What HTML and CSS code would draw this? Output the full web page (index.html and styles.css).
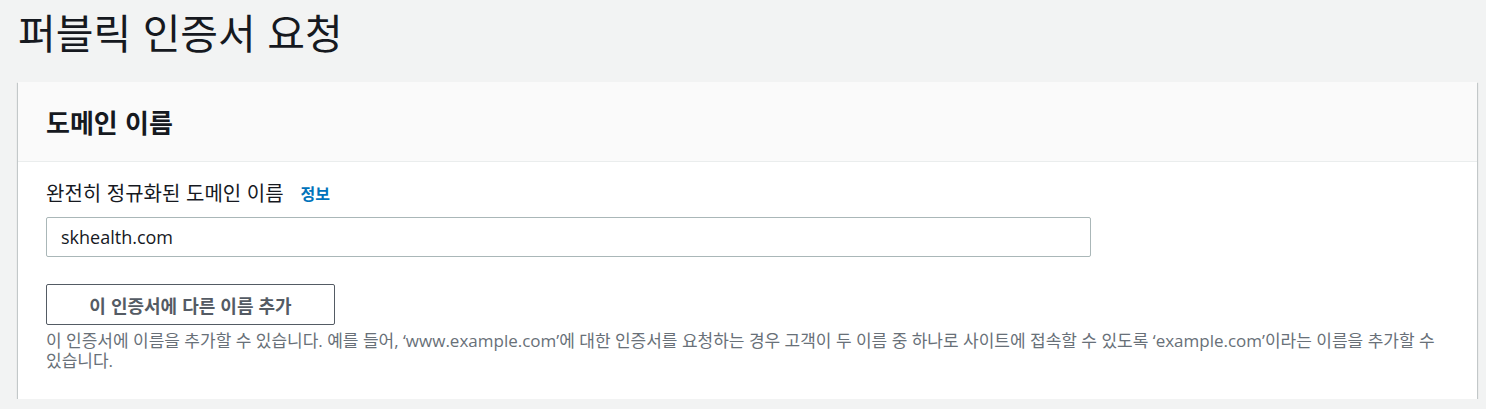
FILE: index.html
```html
<!DOCTYPE html>
<html lang="ko">
<head>
<meta charset="utf-8">
<link rel="stylesheet" href="styles.css">
</head>
<body>
<div class="page">
  <h1 class="title">퍼블릭 인증서 요청</h1>
  <section class="card">
    <div class="card-header">
      <h2 class="card-title">도메인 이름</h2>
    </div>
    <div class="card-body">
      <div class="label-row">
        <span class="label">완전히 정규화된 도메인 이름</span>
        <a class="info">정보</a>
      </div>
      <div class="input">skhealth.com</div>
      <button class="btn">이 인증서에 다른 이름 추가</button>
      <p class="desc">이 인증서에 이름을 추가할 수 있습니다. 예를 들어, ‘www.example.com’에 대한 인증서를 요청하는 경우 고객이 두 이름 중 하나로 사이트에 접속할 수 있도록 ‘example.com’이라는 이름을 추가할 수 있습니다.</p>
    </div>
  </section>
</div>
</body>
</html>
```

FILE: styles.css
```css
html, body {
  margin: 0;
  padding: 0;
  background: #f2f3f3;
}
body {
  font-family: "Open Sans", "Noto Sans CJK KR", sans-serif;
  color: #16191f;
}
.page {
  padding: 0 9px 0 18px;
}
.title {
  margin: 0;
  padding-top: 7px;
  height: 82px;
  box-sizing: border-box;
  font-family: "Noto Sans CJK KR", sans-serif;
  font-weight: 400;
  font-size: 41px;
  line-height: 48px;
  color: #16191f;
}
.card {
  background: #fff;
  box-shadow: 0 1px 1px 0 rgba(0,28,36,0.3), 1px 1px 1px 0 rgba(0,28,36,0.15), -1px 1px 1px 0 rgba(0,28,36,0.15);
}
.card-header {
  background: #fafafa;
  border-bottom: 1px solid #eaeded;
  height: 80px;
  box-sizing: border-box;
  padding: 0 28px;
  display: flex;
  align-items: center;
}
.card-title {
  margin: 0;
  font-family: "Noto Sans CJK KR", sans-serif;
  font-weight: 700;
  font-size: 26px;
  line-height: 32px;
  color: #16191f;
}
.card-body {
  padding: 19px 28px 28px;
}
.label-row {
  display: flex;
  align-items: center;
  gap: 17px;
  height: 24px;
}
.label {
  font-family: "Noto Sans CJK KR", sans-serif;
  font-size: 20px;
  line-height: 24px;
  color: #16191f;
}
.info {
  font-family: "Noto Sans CJK KR", sans-serif;
  font-size: 16px;
  font-weight: 700;
  color: #0073bb;
}
.input {
  margin-top: 12px;
  width: 1045px;
  height: 40px;
  box-sizing: border-box;
  border: 1px solid #aab7b8;
  border-radius: 2px;
  padding: 0 14px;
  display: flex;
  align-items: center;
  font-size: 18px;
  color: #16191f;
}
.btn {
  display: block;
  margin-top: 27px;
  width: 289px;
  height: 41px;
  box-sizing: border-box;
  background: #fff;
  border: 1px solid #545b64;
  border-radius: 2px;
  font-family: "Noto Sans CJK KR", sans-serif;
  font-size: 18px;
  font-weight: 700;
  color: #545b64;
  padding: 0;
}
.desc {
  margin: 6px 0 0;
  font-size: 17px;
  line-height: 20px;
  color: #687078;
}
```
